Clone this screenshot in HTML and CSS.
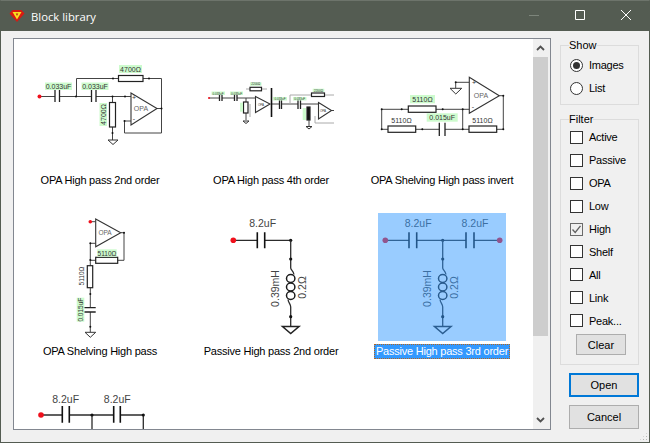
FILE: index.html
```html
<!DOCTYPE html>
<html lang="en">
<head>
<meta charset="utf-8">
<title>Block library</title>
<link rel="stylesheet" href="styles.css">
</head>
<body>
<div class="window">
  <header class="titlebar">
    <svg class="app-icon" width="16" height="14" viewBox="0 0 16 14">
      <path d="M3.500 1H12.500L15.500 4.500L8 13L.5 4.500Z" fill="#d81a12"/>
      <path d="M3.500 3H12.500L8 10.500Z" fill="#f7e020"/>
      <path d="M6.700 4.500H9.300L8 7Z" fill="#c02010"/>
    </svg>
    <span class="title">Block library</span>
    <div class="win-buttons">
      <svg class="win-btn" width="46" height="31" viewBox="0 0 46 31"><path d="M18 15.500H28" stroke="#7d857b" fill="none"/></svg>
      <svg class="win-btn" width="46" height="31" viewBox="0 0 46 31"><path d="M18.500 10.500H27.500V19.500H18.500Z" stroke="#fff" fill="none"/></svg>
      <svg class="win-btn" width="46" height="31" viewBox="0 0 46 31"><path d="M18 10L28 20M28 10L18 20" stroke="#fff" fill="none"/></svg>
    </div>
  </header>

  <main class="body">
    <section class="listbox">
      <div class="grid">
        <figure class="cell">
          <svg class="diagram" width="128" height="128" viewBox="36 42 128 128">
            <path class="wire" d="M40 96.500H55M60 96.500H91M96 96.500H131M76.500 96.500V78.500H118M143 78.500H161.500V133H124.500V121H131M157 108.500H161.500M112.500 96.500V102M112.500 127V140"/>
            <path class="plate" d="M55 90V102M59.500 90V102M91.500 90V102M96 90V102"/>
            <rect class="res" x="118.500" y="75.500" width="24.500" height="6"/>
            <rect class="res" x="109.500" y="102.500" width="6" height="24.500"/>
            <path class="opa" d="M131 93L157 108.500L131 125Z"/>
            <path class="gnd" d="M108 140H118L113 144.500Z"/>
            <circle class="red" cx="39.500" cy="96.500" r="2"/>
            <g class="dots"><circle cx="76" cy="96.500" r="1"/><circle cx="112.500" cy="96.500" r="1"/><circle cx="125" cy="96.500" r="1"/><circle cx="113" cy="78.500" r="1"/><circle cx="149" cy="78.500" r="1"/><circle cx="161.500" cy="108.500" r="1"/><circle cx="124.500" cy="121" r="1"/><circle cx="112.500" cy="133" r="1"/></g>
            <rect class="tag" x="45" y="82.500" width="27" height="7.500"/><text class="t7" x="58.500" y="88.800">0.033uF</text>
            <rect class="tag" x="81.500" y="82.500" width="27" height="7.500"/><text class="t7" x="95" y="88.800">0.033uF</text>
            <rect class="tag" x="119" y="65" width="23" height="8"/><text class="t7" x="130.500" y="71.800">4700Ω</text>
            <rect class="tag" x="99.500" y="103" width="7.500" height="23"/><text class="t7" transform="translate(105.800 114.500) rotate(-90)">4700Ω</text>
            <text class="t7 faint" x="141" y="110.500">OPA</text>
            <text class="t7" x="134" y="100">+</text><text class="t7" x="134" y="121">-</text>
          </svg>
          <figcaption class="caption">OPA High pass 2nd order</figcaption>
        </figure>

        <figure class="cell">
          <svg class="diagram" width="128" height="128" viewBox="207 42 128 128">
            <path class="wire" d="M209 98H219M222 98H234M237 98H256M246 98V102M246 113V120M271 104H279M281 104H298M300 104H318M331 110.500H334"/>
            <path class="wire faint-line" d="M290 104V95H312M325 95H334M315 123H334M315 116V123M246 89H250.500M261.500 89H267M250 104V117"/>
            <path class="plate" d="M219.500 95V101M222 95V101M234.500 95V101M237 95V101M279.500 99V109M281.500 99V109M298 99V109M300.500 99V109"/>
            <path class="thick" d="M271.500 88V117"/>
            <rect class="res" x="250" y="87.300" width="11.500" height="3.500"/>
            <rect class="res" x="311.500" y="93" width="13" height="3.500"/>
            <rect class="res" x="243.500" y="102" width="4.500" height="11"/>
            <rect class="res dark" x="307" y="107" width="3" height="13"/>
            <path class="opa" d="M255.500 96.500L270 104L255.500 112.500Z"/>
            <path class="opa" d="M318.500 102.500L331.500 110.500L318.500 119Z"/>
            <path class="gnd" d="M243 121H249L246 123.500Z"/>
            <path class="wire" d="M309 120V126"/>
            <path class="gnd" d="M306 126.500H312L309 129Z"/>
            <circle class="red small" cx="209" cy="98" r="1"/>
            <rect class="tag" x="211.500" y="91.500" width="13.500" height="3.500"/><text class="t3" x="218" y="94.500">0.033uF</text>
            <rect class="tag" x="230" y="91.500" width="13" height="3.500"/><text class="t3" x="236.500" y="94.500">0.033uF</text>
            <rect class="tag" x="250" y="82.300" width="11.500" height="3.500"/><text class="t3" x="255.800" y="85.300">2200Ω</text>
            <rect class="tag" x="273" y="97" width="14" height="3.500"/><text class="t3" x="280" y="100">0.033uF</text>
            <rect class="tag" x="293" y="97" width="13.500" height="3.500"/><text class="t3" x="299.700" y="100">0.033uF</text>
            <rect class="tag" x="312.700" y="88.700" width="11.600" height="3.300"/><text class="t3" x="318.500" y="91.500">2200Ω</text>
            <rect class="tag" x="240" y="102.700" width="3" height="9"/>
            <rect class="tag" x="302.700" y="108" width="3.300" height="12"/>
            <text class="t3" x="261" y="105.500">OPA</text><text class="t3" x="323" y="112">OPA</text>
          </svg>
          <figcaption class="caption">OPA High pass 4th order</figcaption>
        </figure>

        <figure class="cell">
          <svg class="diagram" width="128" height="128" viewBox="378 42 128 128">
            <path class="wire" d="M455.700 82.300H469M455.700 82.300V88.300M499.300 95.700H503.300V129.300H496.700M469.300 109.300H436M408.300 109.300H381.700V129.300H388M415.700 129.300H439.300M445 129.300H469M462.700 109.300V129.300"/>
            <path class="plate" d="M439.300 122.700V136M445 122.700V136"/>
            <rect class="res" x="408.300" y="106" width="27.700" height="6.300"/>
            <rect class="res" x="388" y="126" width="27.700" height="6.300"/>
            <rect class="res" x="469" y="126" width="27.700" height="6.300"/>
            <path class="opa" d="M469.300 77.300L499.300 95.700L469.300 113.300Z"/>
            <path class="gnd" d="M450 88.300H461.700L455.800 94Z"/>
            <g class="dots"><circle cx="455.700" cy="82.300" r="1"/><circle cx="381.700" cy="109.300" r="1"/><circle cx="401.700" cy="109.300" r="1"/><circle cx="442.700" cy="109.300" r="1"/><circle cx="462.700" cy="109.300" r="1"/><circle cx="381.700" cy="129.300" r="1"/><circle cx="422.300" cy="129.300" r="1"/><circle cx="462.700" cy="129.300" r="1"/><circle cx="503.300" cy="129.300" r="1"/><circle cx="503.300" cy="95.700" r="1"/></g>
            <rect class="tag" x="410" y="95" width="25" height="8.300"/><text class="t7" x="422.500" y="102">5110Ω</text>
            <text class="t7" x="401.500" y="123">5110Ω</text>
            <rect class="tag" x="426.700" y="113.300" width="31" height="8.400"/><text class="t7" x="442.200" y="120.300">0.015uF</text>
            <text class="t7" x="482.500" y="123">5110Ω</text>
            <text class="t7 faint" x="481" y="97.500">OPA</text>
            <text class="t7" x="474" y="85">+</text><text class="t7" x="473" y="109">-</text>
          </svg>
          <figcaption class="caption">OPA Shelving High pass invert</figcaption>
        </figure>

        <figure class="cell">
          <svg class="diagram" width="128" height="128" viewBox="36 213 128 128">
            <path class="wire" d="M90.300 221.700H95.700M95.700 243.300H90.300V265.700M120.700 232.700H124V260.300H117.700M95.700 260.300H90.300M90.300 287.700V307.700M90.300 312V332.300"/>
            <path class="plate" d="M84.300 307.700H95.700M84.300 312H95.700"/>
            <rect class="res" x="95.700" y="257.300" width="22" height="6"/>
            <rect class="res" x="87.300" y="265.700" width="5.400" height="22"/>
            <path class="opa" d="M95.700 219L120.700 232.700L95.700 246.700Z"/>
            <path class="gnd" d="M85 332.300H95.700L90.300 337.300Z"/>
            <circle class="red" cx="90.300" cy="221.700" r="1.800"/>
            <g class="dots"><circle cx="124" cy="232.700" r="1"/><circle cx="90.300" cy="243.300" r="1"/><circle cx="90.300" cy="260" r="1"/><circle cx="90.300" cy="294" r="1"/><circle cx="90.300" cy="326.700" r="1"/></g>
            <rect class="tag" x="97.300" y="249.300" width="19.400" height="7.400"/><text class="t6" x="107" y="255.500">5110Ω</text>
            <text class="t6" transform="translate(83.800 276) rotate(-90)">5110Ω</text>
            <rect class="tag" x="76.700" y="297.700" width="7.600" height="24"/><text class="t6" transform="translate(82.700 309.700) rotate(-90)">0.015uF</text>
            <text class="t6 faint" x="105" y="235">OPA</text>
          </svg>
          <figcaption class="caption">OPA Shelving High pass</figcaption>
        </figure>

        <figure class="cell">
          <svg class="diagram" width="128" height="128" viewBox="207 213 128 128">
            <path class="wire strong" d="M233.300 240.300H257.300M264.700 240.300H290.700"/>
            <path class="plate strong" d="M257.300 232.300V248.300M264.700 232.300V248.300"/>
            <circle class="red" cx="233.300" cy="240.300" r="2.800"/>
            <circle class="dot" cx="290.700" cy="240.300" r="1.600"/>
            <text class="t10" x="262.700" y="227">8.2uF</text>
            <path class="wire strong" d="M290.700 240.300V268C290.700 270 293.500 271 294 274.500M288 299.500C288.500 303 290.700 304 290.700 307V326"/>
            <ellipse class="coil" cx="290.700" cy="278.500" rx="4.200" ry="4"/>
            <ellipse class="coil" cx="290.700" cy="287" rx="4.200" ry="4"/>
            <ellipse class="coil" cx="290.700" cy="295.500" rx="4.200" ry="4"/>
            <circle class="dot" cx="290.700" cy="259" r="1.600"/><circle class="dot" cx="290.700" cy="316.700" r="1.600"/>
            <path class="gnd strong" d="M282.500 326.500H299L290.700 333.500Z"/>
            <text class="t10" transform="translate(278.500 288.500) rotate(-90)">0.39mH</text>
            <text class="t10" transform="translate(305.500 287.500) rotate(-90)">0.2Ω</text>
          </svg>
          <figcaption class="caption">Passive High pass 2nd order</figcaption>
        </figure>

        <figure class="cell selected">
          <div class="image-wrap">
            <svg class="diagram" width="128" height="128" viewBox="378 213 128 128">
              <path class="wire strong" d="M385.300 240.300H409M416.700 240.300H466M474 240.300H499.700"/>
              <path class="plate strong" d="M409 232.300V248.300M416.700 232.300V248.300M466 232.300V248.300M474 232.300V248.300"/>
              <circle class="red" cx="385.300" cy="240.300" r="2.800"/>
              <circle class="red" cx="499.700" cy="240.300" r="2.800"/>
              <circle class="dot" cx="442.700" cy="240.300" r="1.600"/>
              <text class="t10" x="418.200" y="227">8.2uF</text>
              <text class="t10" x="475" y="227">8.2uF</text>
              <path class="wire strong" d="M442.700 240.300V268C442.700 270 445.500 271 446 274.500M440 299.500C440.500 303 442.700 304 442.700 307V326"/>
              <ellipse class="coil" cx="442.700" cy="278.500" rx="4.200" ry="4"/>
              <ellipse class="coil" cx="442.700" cy="287" rx="4.200" ry="4"/>
              <ellipse class="coil" cx="442.700" cy="295.500" rx="4.200" ry="4"/>
              <circle class="dot" cx="442.700" cy="259" r="1.600"/><circle class="dot" cx="442.700" cy="316.700" r="1.600"/>
              <path class="gnd strong" d="M434.500 326.500H451L442.700 333.500Z"/>
              <text class="t10" transform="translate(430.500 288.500) rotate(-90)">0.39mH</text>
              <text class="t10" transform="translate(457.500 287.500) rotate(-90)">0.2Ω</text>
            </svg>
          </div>
          <figcaption class="caption">Passive High pass 3rd order</figcaption>
        </figure>

        <figure class="cell">
          <svg class="diagram" width="128" height="128" viewBox="36 384 128 128">
            <path class="wire strong" d="M41 415H62.300M69.300 415H113.700M120.300 415H143.300M92 415V440M143.300 415V440"/>
            <path class="plate strong" d="M62.300 406V422.700M69.300 406V422.700M113.700 406V422.700M120.300 406V422.700"/>
            <circle class="red" cx="41" cy="415" r="2.800"/>
            <circle class="dot" cx="92" cy="415" r="1.600"/><circle class="dot" cx="143.300" cy="415" r="1.600"/>
            <text class="t10" x="65.700" y="403">8.2uF</text>
            <text class="t10" x="117.300" y="403">8.2uF</text>
          </svg>
        </figure>
      </div>
      <div class="scrollbar">
        <button class="scroll-btn"><svg width="9" height="6" viewBox="0 0 9 6"><path d="M1 5L4.500 1.500L8 5" fill="none" stroke="#505050" stroke-width="1.800"/></svg></button>
        <div class="track"><div class="thumb"></div></div>
        <button class="scroll-btn"><svg width="9" height="6" viewBox="0 0 9 6"><path d="M1 1L4.500 4.500L8 1" fill="none" stroke="#505050" stroke-width="1.800"/></svg></button>
      </div>
    </section>

    <aside class="sidebar">
      <fieldset class="group group-show">
        <legend class="legend">Show</legend>
        <div class="opt"><span class="radio on"></span><span>Images</span></div>
        <div class="opt"><span class="radio"></span><span>List</span></div>
      </fieldset>
      <fieldset class="group group-filter">
        <legend class="legend">Filter</legend>
        <div class="opt"><span class="check"></span><span>Active</span></div>
        <div class="opt"><span class="check"></span><span>Passive</span></div>
        <div class="opt"><span class="check"></span><span>OPA</span></div>
        <div class="opt"><span class="check"></span><span>Low</span></div>
        <div class="opt"><span class="check checked"><svg width="11" height="11" viewBox="0 0 11 11"><path d="M1.500 5.500L4.200 8.500L9.500 1.800" fill="none" stroke="#606060" stroke-width="1.300"/></svg></span><span>High</span></div>
        <div class="opt"><span class="check"></span><span>Shelf</span></div>
        <div class="opt"><span class="check"></span><span>All</span></div>
        <div class="opt"><span class="check"></span><span>Link</span></div>
        <div class="opt"><span class="check"></span><span>Peak...</span></div>
        <button class="btn btn-clear">Clear</button>
      </fieldset>
      <button class="btn btn-main btn-default">Open</button>
      <button class="btn btn-main">Cancel</button>
    </aside>
  </main>
  <div class="grip"></div>
</div>
</body>
</html>
```

FILE: styles.css
```css
* { box-sizing: border-box; }

html, body {
  margin: 0;
  padding: 0;
  width: 650px;
  height: 443px;
  overflow: hidden;
}

body {
  font-family: "Liberation Sans", Arial, sans-serif;
  font-size: 11px;
  color: #000;
}

.window {
  position: relative;
  width: 650px;
  height: 443px;
  display: flex;
  flex-direction: column;
  background: #f0f0f0;
  border: 1px solid #545c52;
  border-top-color: #6d746b;
}

.titlebar {
  height: 30px;
  flex: none;
  display: flex;
  align-items: center;
  background: #545c52;
  color: #fff;
  padding-left: 8px;
}

.app-icon { margin-right: 5px; flex: none; }

.title {
  font-family: "Open Sans", sans-serif;
  font-size: 11.300px;
  margin-left: 1px;
  color: #fff;
}

.win-buttons { margin-left: auto; display: flex; }
.win-btn { display: block; margin-top: -1px; }

.body {
  flex: 1;
  min-height: 0;
  display: flex;
  gap: 9px;
  padding: 7px 10px 12px 12px;
}

.listbox {
  width: 538px;
  height: 392px;
  flex: none;
  display: flex;
  background: #fff;
  border: 1px solid #828790;
  overflow: hidden;
}

.grid {
  flex: 1;
  min-width: 0;
  display: grid;
  grid-template-columns: repeat(3, 171px);
  grid-auto-rows: 171px;
  padding-left: .5px;
  padding-top: 3px;
  align-content: start;
  overflow: hidden;
}

.cell {
  margin: 0;
  display: flex;
  flex-direction: column;
  align-items: center;
}

.diagram { display: block; flex: none; overflow: hidden; }

.image-wrap { position: relative; width: 128px; height: 128px; flex: none; }
.image-wrap::after {
  content: "";
  position: absolute;
  inset: 0;
  background: rgba(51, 153, 255, .5);
}

.caption {
  margin-top: 3px;
  height: 15px;
  line-height: 15px;
  font-size: 11px;
  letter-spacing: -.22px;
  padding: 0 2px;
  white-space: nowrap;
  color: #000;
}

.selected .caption {
  background: #3399ff;
  color: #fff;
  outline: 1px dotted #b5651d;
  outline-offset: -1px;
}

.wire { fill: none; stroke: #444; stroke-width: 1; }
.wire.strong { stroke: #2c2c2c; stroke-width: 1.300; }
.faint-line { stroke: #aaa; }
.plate { fill: none; stroke: #222; stroke-width: 1.300; }
.plate.strong { stroke: #111; stroke-width: 1.600; }
.thick { fill: none; stroke: #111; stroke-width: 1.600; }
.coil { fill: none; stroke: #1c1c1c; stroke-width: 1.500; }
.res { fill: #fff; stroke: #222; stroke-width: 1.200; }
.res.dark { fill: #111; }
.opa { fill: #fff; stroke: #333; stroke-width: 1.100; }
.gnd { fill: #fff; stroke: #333; stroke-width: 1; }
.gnd.strong { stroke: #222; stroke-width: 1.500; }
.red { fill: #f0101c; }
.dots circle, .dot { fill: #111; }
.tag { fill: #cdfbcd; }

.t3, .t6, .t7, .t10 {
  font-family: "Liberation Sans", Arial, sans-serif;
  text-anchor: middle;
  fill: #333;
}
.t3 { font-size: 3px; }
.t6 { font-size: 6.500px; }
.t7 { font-size: 7px; }
.t10 { font-size: 10.500px; fill: #444; }
.faint { fill: #666; }

.scrollbar {
  width: 17px;
  flex: none;
  display: flex;
  flex-direction: column;
  background: #f0f0f0;
}

.scroll-btn {
  width: 15px;
  height: 18px;
  flex: none;
  padding: 0;
  border: 0;
  background: #f0f0f0;
  display: flex;
  align-items: center;
  justify-content: center;
}

.track { flex: 1; min-height: 0; }
.thumb { width: 15px; height: 279px; background: #cdcdcd; }

.sidebar {
  width: 79px;
  flex: none;
  display: flex;
  flex-direction: column;
}

.group {
  margin: 0;
  min-width: 0;
  border: 1px solid #dcdcdc;
  padding: 0 0 0 9px;
}

.group-show { height: 67px; flex: none; }
.group-filter { height: 253px; flex: none; margin-top: 7px; }

.legend {
  padding: 0;
  margin-left: -1px;
  height: 14px;
  line-height: 14px;
  font-size: 11px;
}

.opt {
  height: 22.900px;
  display: flex;
  align-items: center;
  gap: 6px;
  letter-spacing: -.25px;
}

.group-show .opt:first-of-type { margin-top: 2px; }

.radio {
  width: 13px;
  height: 13px;
  flex: none;
  border: 1px solid #333;
  border-radius: 50%;
  background: #fff;
  display: flex;
  align-items: center;
  justify-content: center;
}
.radio.on::before {
  content: "";
  width: 7px;
  height: 7px;
  border-radius: 50%;
  background: #333;
}

.check {
  width: 13px;
  height: 13px;
  flex: none;
  border: 1px solid #333;
  background: #fff;
  display: flex;
  align-items: center;
  justify-content: center;
}
.check.checked { border-color: #6a6a6a; background: #f0f0f0; }

.btn {
  display: block;
  padding: 0;
  background: #e1e1e1;
  border: 1px solid #adadad;
  font-family: "Liberation Sans", Arial, sans-serif;
  font-size: 11px;
  color: #000;
}

.btn-clear { width: 50px; height: 21px; margin: 2px 0 0 6px; }

.btn-main { width: 70px; height: 24px; flex: none; margin-left: 9px; margin-top: 8px; }
.btn-default { border: 2px solid #0078d7; }

.grip {
  position: absolute;
  right: 1px;
  bottom: 1px;
  width: 9px;
  height: 9px;
  background-image: radial-gradient(#b4b4b4 0.800px, transparent 1px);
  background-size: 3px 3px;
  clip-path: polygon(100% 0, 100% 100%, 0 100%);
}
```
